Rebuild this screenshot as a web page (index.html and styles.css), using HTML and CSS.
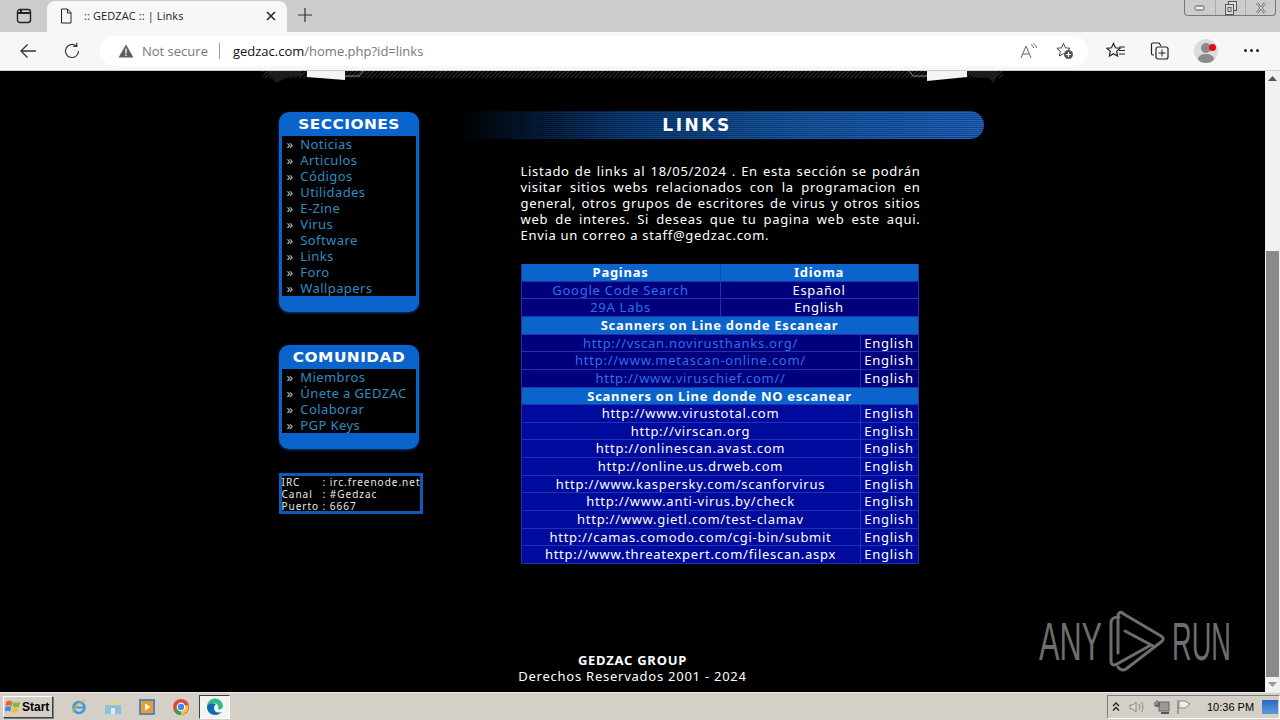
FILE: index.html
```html
<!DOCTYPE html>
<html>
<head>
	<title>:: GEDZAC :: | Links</title>
	<meta charset="utf-8">
	<link rel="stylesheet" href="styles.css">
</head>
<body>
<div class='tabbar'>
	<svg class='tabs-icon' width='16' height='16' viewBox='0 0 16 16'><rect x='1.5' y='1.5' width='13' height='13' rx='2.5' fill='none' stroke='#222' stroke-width='1.4'/><path d='M2 5h12M5 2v3' stroke='#222' stroke-width='2' fill='none'/></svg>
	<div class='tab'>
		<svg width='12' height='16' viewBox='0 0 12 16'><path d='M1.5 1h6l3.5 3.5V15h-9.500zM7.500 1v4h3.500' fill='none' stroke='#222'/></svg>
		<span class='tab-title'>:: GEDZAC :: | Links</span>
		<svg class='tab-close' width='10' height='10' viewBox='0 0 10 10'><path d='M1 1l8 8M9 1l-8 8' stroke='#222' stroke-width='1.500'/></svg>
	</div>
	<svg class='tab-new' width='16' height='16' viewBox='0 0 16 16'><path d='M8 1v14M1 8h14' stroke='#333' stroke-width='1.200'/></svg>
	<div class='win-btns'>
		<div class='win-btn'><svg width='12' height='8' viewBox='0 0 12 8'><rect x='1' y='2' width='9' height='4' rx='1.500' fill='#eee' stroke='#555'/></svg></div>
		<div class='win-btn'><svg width='12' height='14' viewBox='0 0 12 14'><rect x='3.500' y='0.500' width='8' height='9' fill='#ddd' stroke='#555'/><rect x='0.500' y='3.500' width='8' height='10' fill='#ddd' stroke='#555'/><rect x='3' y='6.500' width='3' height='4' fill='none' stroke='#555'/></svg></div>
		<div class='win-btn win-close'><svg width='12' height='12' viewBox='0 0 12 12'><path d='M2 1l8 10M10 1L2 11' stroke='#666' stroke-width='2.400'/><path d='M2 1l8 10M10 1L2 11' stroke='#eee' stroke-width='1'/></svg></div>
	</div>
</div>
<div class='toolbar'>
	<svg class='tool' width='18' height='16' viewBox='0 0 18 16'><path d='M17 8H2M8.500 1.500L2 8l6.500 6.500' fill='none' stroke='#333' stroke-width='1.300'/></svg>
	<svg class='tool reload' width='18' height='18' viewBox='0 0 18 18'><path d='M15.500 9a6.500 6.500 0 1 1-2.200-4.900M13.800 0.800v3.600h-3.600' fill='none' stroke='#333' stroke-width='1.200'/></svg>
	<div class='address'>
		<svg width='16' height='14' viewBox='0 0 16 14'><path d='M8 0.500L15.500 13.500H0.500z' fill='#5f5f5f'/><path d='M8 4.500v5M8 10.500v1.500' stroke='#fff' stroke-width='1.300'/></svg>
		<span class='not-secure'>Not secure</span>
		<span class='addr-sep'></span>
		<span class='url'><b>gedzac.com</b>/home.php?id=links</span>
		<svg class='addr-read' width='18' height='16' viewBox='0 0 18 16'><path d='M1 15L6 3l5 12M2.800 11h6.400M11 1.500c1.500 0.800 2.400 2 2.600 3.500M13.500 0.500c1.600 1 2.700 2.600 3 4.500' fill='none' stroke='#666' stroke-width='1'/></svg>
		<svg class='addr-star' width='18' height='18' viewBox='0 0 18 18'><path d='M7.500 1.500l2 4.300 4.600 0.500-3.400 3.100 0.900 4.600-4.100-2.300-4.100 2.300 0.900-4.600L0.900 6.300l4.600-0.500z' fill='none' stroke='#444'/><circle cx='12.500' cy='12.500' r='4.500' fill='#555'/><path d='M12.500 10v5M10 12.500h5' stroke='#fff'/></svg>
	</div>
	<svg class='tool favs' width='20' height='18' viewBox='0 0 20 18'><path d='M7.500 1.500l2 4.300 4.600 0.500-3.400 3.100 0.900 4.600-4.100-2.300-4.100 2.300 0.900-4.600L0.900 6.300l4.600-0.500z' fill='none' stroke='#222' stroke-width='1.200'/><path d='M13 5h6M13 8.500h6M13 12h6' stroke='#222'/></svg>
	<svg class='tool colls' width='20' height='18' viewBox='0 0 20 18'><path d='M4 13H3a1.500 1.500 0 0 1-1.500-1.500V2.500A1.500 1.500 0 0 1 3 1h6l2 3' fill='none' stroke='#222' stroke-width='1.200'/><rect x='6' y='5' width='12' height='12' rx='2' fill='none' stroke='#222' stroke-width='1.200'/><path d='M12 7.500v7M8.500 11h7' stroke='#222'/></svg>
	<div class='avatar'><span class='avatar-head'></span><span class='avatar-body'></span><span class='avatar-dot'></span></div>
	<div class='more'><span></span><span></span><span></span></div>
</div>

<div class='view'>
	<div class='page'>
		<div class='site'>
			<svg class='banner' width='740' height='12' viewBox='0 0 740 12'>
				<defs><pattern id='hatch' width='3' height='3' patternUnits='userSpaceOnUse' patternTransform='rotate(45)'><rect width='1' height='3' fill='#303030'/></pattern></defs>
				<rect x='0' y='0' width='740' height='7' fill='url(#hatch)'/>
				<path d='M3 0l10 12 12-6 14-1V0zM700 0l12 6 14 1 4 5 6-12z' fill='#1c1c1c'/>
				<path d='M44 0h38v9L44 6zM664 0h40v6l-40 4z' fill='#f4f4f4'/>
				<path d='M82 5h14l4-5M664 5h-14l-4-5' fill='none' stroke='#888'/>
			</svg>
			<div class='cols'>
				<div class='side'>
					<div class='box'>
						<div class='box-title'>SECCIONES</div>
						<ul class='menu'>
							<li>» <a>Noticias</a></li>
							<li>» <a>Articulos</a></li>
							<li>» <a>Códigos</a></li>
							<li>» <a>Utilidades</a></li>
							<li>» <a>E-Zine</a></li>
							<li>» <a>Virus</a></li>
							<li>» <a>Software</a></li>
							<li>» <a>Links</a></li>
							<li>» <a>Foro</a></li>
							<li>» <a>Wallpapers</a></li>
						</ul>
					</div>
					<div class='box'>
						<div class='box-title'>COMUNIDAD</div>
						<ul class='menu'>
							<li>» <a>Miembros</a></li>
							<li>» <a>Únete a GEDZAC</a></li>
							<li>» <a>Colaborar</a></li>
							<li>» <a>PGP Keys</a></li>
						</ul>
					</div>
					<div class='irc'>
						<div class='irc-row'><span>IRC</span><span>: irc.freenode.net</span></div>
						<div class='irc-row'><span>Canal</span><span>: #Gedzac</span></div>
						<div class='irc-row'><span>Puerto</span><span>: 6667</span></div>
					</div>
				</div>
				<div class='main'>
					<div class='main-title'>LINKS</div>
					<p class='intro'>Listado de links al 18/05/2024 . En esta sección se podrán visitar sitios webs relacionados con la programacion en general, otros grupos de escritores de virus y otros sitios web de interes. Si deseas que tu pagina web este aqui. Envia un correo a staff@gedzac.com.</p>
					<div class='tabla'>
						<div class='row half head'><div>Paginas</div><div>Idioma</div></div>
						<div class='row half dark'><div class='lnk'>Google Code Search</div><div>Español</div></div>
						<div class='row half dark'><div class='lnk'>29A Labs</div><div>English</div></div>
						<div class='row head'><div>Scanners on Line donde Escanear</div></div>
						<div class='row two dark'><div class='lnk'>http://vscan.novirusthanks.org/</div><div>English</div></div>
						<div class='row two dark'><div class='lnk'>http://www.metascan-online.com/</div><div>English</div></div>
						<div class='row two dark'><div class='lnk'>http://www.viruschief.com//</div><div>English</div></div>
						<div class='row head'><div>Scanners on Line donde NO escanear</div></div>
						<div class='row two'><div>http://www.virustotal.com</div><div>English</div></div>
						<div class='row two'><div>http://virscan.org</div><div>English</div></div>
						<div class='row two'><div>http://onlinescan.avast.com</div><div>English</div></div>
						<div class='row two'><div>http://online.us.drweb.com</div><div>English</div></div>
						<div class='row two'><div>http://www.kaspersky.com/scanforvirus</div><div>English</div></div>
						<div class='row two'><div>http://www.anti-virus.by/check</div><div>English</div></div>
						<div class='row two'><div>http://www.gietl.com/test-clamav</div><div>English</div></div>
						<div class='row two'><div>http://camas.comodo.com/cgi-bin/submit</div><div>English</div></div>
						<div class='row two'><div>http://www.threatexpert.com/filescan.aspx</div><div>English</div></div>
					</div>
				</div>
			</div>
			<div class='foot'>
				<b>GEDZAC GROUP</b><br>
				Derechos Reservados 2001 - 2024
			</div>
		</div>
		<svg class='anyrun' width='200' height='64' viewBox='0 0 200 64'>
			<text class='anyrun-text' transform='translate(0 51) scale(0.578 1)'>ANY</text>
			<path d='M80 8C74 8 72 10 72 14V52C72 56 75 57 78 55L112 36M83 4L122 27C125 29 125 31 122 33L87 60C84 62 81 61 79 58M84 4C81 2 79 4 79 8V44M86 22L114 37' fill='none' stroke='#6e6e6e' stroke-width='3' stroke-linecap='round' stroke-linejoin='round'/>
			<text class='anyrun-text' transform='translate(133 51) scale(0.513 1)'>RUN</text>
		</svg>
	</div>
	<div class='scrollbar'>
		<div class='sb-arrow'><svg width='9' height='5' viewBox='0 0 9 5'><path d='M4.500 0L9 5H0z' fill='#555'/></svg></div>
		<div class='sb-track'><div class='sb-thumb'></div></div>
		<div class='sb-arrow'><svg width='9' height='5' viewBox='0 0 9 5'><path d='M0 0h9L4.500 5z' fill='#999'/></svg></div>
	</div>
</div>

<div class='taskbar'>
	<div class='start'>
		<svg width='16' height='15' viewBox='0 0 16 15'><path d='M1 3c2-1.500 4-1.500 6.500-0.500L6.500 7C4 6 3 6 0.500 7z' fill='#e8642c'/><path d='M8.500 3c2 1 4 1 6.500 0l-1 4.500c-2.500 1-4.500 1-6.500 0z' fill='#7cb83c'/><path d='M0.500 8C3 7 4 7 6.300 8l-1 4.500c-2.300-1-3.800-1-5.800 0z' fill='#3c8ce0'/><path d='M7.300 8.500c2 1 4 1 6.500 0l-1 4.500c-2.500 1-4.500 1-6.500 0z' fill='#f0c030'/></svg>
		<span>Start</span>
	</div>
	<div class='task-icons'>
		<svg width='18' height='18' viewBox='0 0 18 18'><circle cx='9' cy='9.500' r='5.500' fill='none' stroke='#3c9ae0' stroke-width='2.600'/><path d='M3 9.500h12' stroke='#3c9ae0' stroke-width='2'/><path d='M2 15c3-7 8-12 14-13' fill='none' stroke='#e0b030' stroke-width='1.200'/></svg>
		<svg width='18' height='18' viewBox='0 0 18 18'><path d='M1 5h6l1-2h7v5H1z' fill='#e8d48c'/><path d='M1 7h16v9H1z' fill='#8cc0dc'/><path d='M7 10h4v6H7z' fill='#dcecf4'/></svg>
		<svg width='18' height='18' viewBox='0 0 18 18'><rect x='1' y='1' width='16' height='16' fill='#4c88c0'/><rect x='3' y='3' width='12' height='12' fill='#f09a28'/><path d='M7 5.500l5.500 3.500L7 12.500z' fill='#fff'/></svg>
		<svg width='18' height='18' viewBox='0 0 18 18'><circle cx='9' cy='9' r='8' fill='#e0483c'/><path d='M9 9L2 13a8 8 0 0 0 7 4z' fill='#3aa050'/><path d='M9 9l7-2a8 8 0 0 1-7 10z' fill='#f4c430'/><circle cx='9' cy='9' r='3.800' fill='#4285f4' stroke='#fff' stroke-width='1.200'/></svg>
		<div class='task-active'><svg width='18' height='18' viewBox='0 0 18 18'><path d='M1 9a8 8 0 0 1 16-1c0 3-3 4-5 3 1-3-1-6-4-6-3.500 0-6 2-7 4z' fill='#2ebc8c'/><path d='M1 9c0 5 4 8 8 8 3 0 5-1 7-3-4 1.500-8 0-8-4 0-2 1-3 2-4C6 4 1 6 1 9z' fill='#0c6ab8'/></svg></div>
	</div>
	<div class='tray'>
		<svg width='8' height='10' viewBox='0 0 8 10'><path d='M1 4l3-3 3 3M1 8.500l3-3 3 3' fill='none' stroke='#222' stroke-width='1.300'/></svg>
		<svg class='tray-sound' width='16' height='14' viewBox='0 0 16 14'><path d='M1 5h3l3-3v10L4 9H1z' fill='#ddd' stroke='#888'/><path d='M10 4c1 2 1 4 0 6M12.500 2c2 3 2 7 0 10' fill='none' stroke='#888'/></svg>
		<svg class='tray-net' width='16' height='16' viewBox='0 0 16 16'><rect x='5' y='3' width='10' height='9' fill='#999' stroke='#666'/><path d='M3 1v7M1 3v4h4V3' fill='none' stroke='#444'/><path d='M7 14h8' stroke='#555' stroke-width='2'/></svg>
		<svg class='tray-flag' width='16' height='16' viewBox='0 0 16 16'><path d='M2 1v14' stroke='#888' stroke-width='1.500'/><path d='M3 2h6l5 3-5 4H3z' fill='#eee' stroke='#888'/></svg>
		<span class='clock'>10:36 PM</span>
		<div class='show-desktop'></div>
	</div>
</div>
</body>
</html>
```

FILE: styles.css
```css
* {
	box-sizing: border-box;
}
html, body {
	margin: 0;
	height: 720px;
	overflow: hidden;
}
body {
	display: flex;
	flex-direction: column;
	background: #000;
	font-family: "Open Sans", "Noto Sans", sans-serif;
}

/* browser */
.tabbar {
	height: 32px;
	background: #cccccc;
	display: flex;
	align-items: flex-end;
	flex-shrink: 0;
}
.tabs-icon {
	margin: 0 15px 8px 16px;
}
.tab {
	width: 240px;
	height: 31px;
	background: #f7f7f7;
	border-radius: 8px 8px 0 0;
	display: flex;
	align-items: center;
	padding: 0 11px 2px 13px;
}
.tab-title {
	flex: 1;
	margin-left: 12px;
	font-size: 11px;
	letter-spacing: 0.1px;
	color: #222;
}
.tab-new {
	margin: 0 0 9px 10px;
}
.win-btns {
	margin: 0 4px 16px auto;
	display: flex;
	height: 16px;
	border: 1px solid #777;
	border-top: 0;
	border-radius: 0 0 4px 4px;
}
.win-btn {
	width: 30px;
	display: flex;
	align-items: center;
	justify-content: center;
	border-left: 1px solid #aaa;
}
.win-btn:first-child {
	border-left: 0;
}
.toolbar {
	height: 39px;
	background: #f7f7f7;
	border-bottom: 1px solid #cfcfcf;
	display: flex;
	align-items: center;
	flex-shrink: 0;
	padding-bottom: 1px;
}
.tool {
	flex-shrink: 0;
}
.toolbar > .tool:first-child {
	margin-left: 19px;
}
.reload {
	margin-left: 26px;
}
.address {
	width: 988px;
	height: 30px;
	margin-left: 19px;
	background: #fff;
	border-radius: 15px;
	display: flex;
	align-items: center;
	padding: 0 14px 0 18px;
	font-size: 13px;
	color: #777;
}
.not-secure {
	margin-left: 8px;
}
.addr-sep {
	width: 1px;
	height: 16px;
	background: #999;
	margin: 0 13px 0 11px;
}
.url {
	flex: 1;
}
.url b {
	font-weight: normal;
	color: #111;
}
.addr-read {
	margin-right: 18px;
}
.favs {
	margin-left: 18px;
}
.colls {
	margin-left: 24px;
}
.avatar {
	position: relative;
	width: 24px;
	height: 24px;
	margin-left: 24px;
	border-radius: 50%;
	background: #dcdcdc;
	overflow: hidden;
	flex-shrink: 0;
}
.avatar-head {
	position: absolute;
	left: 7px;
	top: 4px;
	width: 10px;
	height: 10px;
	border-radius: 50%;
	background: #8a8a8a;
}
.avatar-body {
	position: absolute;
	left: 4px;
	top: 15px;
	width: 16px;
	height: 10px;
	border-radius: 50%;
	background: #8a8a8a;
}
.avatar-dot {
	position: absolute;
	right: 2px;
	top: 5px;
	width: 7px;
	height: 7px;
	border-radius: 50%;
	background: #e00b1c;
}
.more {
	display: flex;
	gap: 3px;
	margin-left: 26px;
}
.more span {
	width: 3px;
	height: 3px;
	border-radius: 50%;
	background: #222;
}

/* page */
.view {
	height: 621px;
	display: flex;
	flex-shrink: 0;
}
.page {
	position: relative;
	flex: 1;
	background: #000;
	overflow: hidden;
	font-family: "Noto Sans", "DejaVu Sans", sans-serif;
	font-size: 13px;
	color: #fff;
}
.site {
	width: 740px;
	margin: 0 auto;
}
.banner {
	display: block;
}
.cols {
	display: flex;
	padding: 29px 0 0 16px;
}
.side {
	width: 182px;
	flex-shrink: 0;
}
.box {
	width: 140px;
	background: #0a64cc;
	border-radius: 10px;
	padding: 0 3px 16px;
	margin-bottom: 33px;
	box-shadow: 0 1px 3px #0a3a80;
}
.box-title {
	height: 24px;
	line-height: 24px;
	text-align: center;
	font-family: "DejaVu Sans", sans-serif;
	font-weight: bold;
	font-size: 14px;
	letter-spacing: 0.4px;
	transform: scaleX(1.1);
}
.menu {
	list-style: none;
	margin: 0;
	padding: 0 0 0 5px;
	background: #000;
	color: #b8c8d0;
}
.menu li {
	height: 16px;
	line-height: 16px;
	white-space: nowrap;
	letter-spacing: 0.4px;
}
.menu a {
	color: #2f8cc0;
	margin-left: 3px;
}
.irc {
	width: 144px;
	height: 41px;
	margin-top: -9px;
	border: 3px solid #0a5cb8;
	font-size: 10px;
	line-height: 12px;
	letter-spacing: 1px;
	color: #e8e8e8;
	white-space: nowrap;
}
.irc-row {
	display: flex;
}
.irc-row span:first-child {
	width: 41px;
	flex-shrink: 0;
}
.main {
	width: 523px;
}
.main-title {
	height: 28px;
	line-height: 28px;
	margin-top: -1px;
	padding-right: 50px;
	text-align: center;
	font-family: "DejaVu Sans", sans-serif;
	font-weight: bold;
	font-size: 17px;
	letter-spacing: 2.5px;
	border-radius: 0 14px 14px 0;
	background:
		repeating-linear-gradient(to bottom, rgba(0,0,0,0.35) 0 1px, transparent 1px 2px),
		linear-gradient(to right, #000 0%, #0a3a78 30%, #1458a8 60%, #1f66c8 100%);
}
.intro {
	width: 400px;
	margin: 24px 0 0 60px;
	line-height: 16px;
	text-align: justify;
	letter-spacing: 0.7px;
}
.tabla {
	width: 398px;
	height: 300px;
	margin: 21px 0 0 60px;
	display: grid;
	grid-template-rows: repeat(17, 1fr);
	gap: 1px;
	padding: 0 1px 1px;
	background: #1c34b4;
	text-align: center;
	letter-spacing: 0.73px;
	line-height: 16px;
}
.row {
	display: grid;
	grid-template-columns: 1fr;
	gap: 1px;
	background: #1c34b4;
}
.row > div {
	background: #000a9c;
	white-space: nowrap;
}
.half {
	grid-template-columns: 198px 1fr;
}
.two {
	grid-template-columns: 338px 1fr;
}
.dark > div {
	background: #00007c;
}
.row.head {
	background: #0850b8;
	font-weight: bold;
}
.row.head > div {
	background: #0a64cc;
}
.row > .lnk {
	color: #2f6ee8;
}
.foot {
	margin-top: 88px;
	text-align: center;
	line-height: 16px;
	letter-spacing: 0.75px;
}
.anyrun {
	position: absolute;
	right: 26px;
	top: 538px;
}
.anyrun-text {
	font-family: "Liberation Sans", sans-serif;
	font-size: 53px;
	fill: #6e6e6e;
}

/* scrollbar */
.scrollbar {
	width: 15px;
	background: #f1f1f1;
	display: flex;
	flex-direction: column;
}
.sb-arrow {
	height: 15px;
	display: flex;
	align-items: center;
	justify-content: center;
}
.sb-track {
	flex: 1;
	padding-top: 165px;
	padding-bottom: 1px;
}
.sb-thumb {
	height: 426px;
	margin: 0 1px;
	background: #8a8a8a;
}

/* taskbar */
.taskbar {
	flex: 1;
	background: #d4d0c8;
	border-top: 1px solid #ece9e1;
	display: flex;
	align-items: center;
	padding-left: 3px;
	font-family: "Liberation Sans", sans-serif;
}
.start {
	width: 50px;
	height: 22px;
	display: flex;
	align-items: center;
	gap: 1px;
	padding-left: 1px;
	border: 1px solid;
	border-color: #fff #404040 #404040 #fff;
	box-shadow: 1px 1px 0 #808080;
	font-weight: bold;
	font-size: 12px;
	color: #000;
}
.task-icons {
	display: flex;
	align-items: center;
	gap: 16px;
	margin-left: 17px;
}
.task-active {
	width: 31px;
	height: 24px;
	margin-left: -7px;
	background: #f4f4f0;
	border: 1px solid;
	border-color: #404040 #fff #fff #404040;
	display: flex;
	align-items: center;
	justify-content: center;
}
.tray {
	margin-left: auto;
	height: 24px;
	width: 173px;
	display: flex;
	align-items: center;
	padding-left: 4px;
	border: 1px solid;
	border-color: #808080 #fff #fff #808080;
	font-size: 11px;
	color: #000;
}
.tray-sound {
	margin-left: 9px;
}
.tray-net {
	margin-left: 9px;
}
.tray-flag {
	margin-left: 6px;
}
.clock {
	margin-left: 15px;
	white-space: nowrap;
}
.show-desktop {
	width: 16px;
	height: 14px;
	margin-left: 8px;
	background: linear-gradient(#2a6ac0, #5a9ae0);
	flex-shrink: 0;
}
```
